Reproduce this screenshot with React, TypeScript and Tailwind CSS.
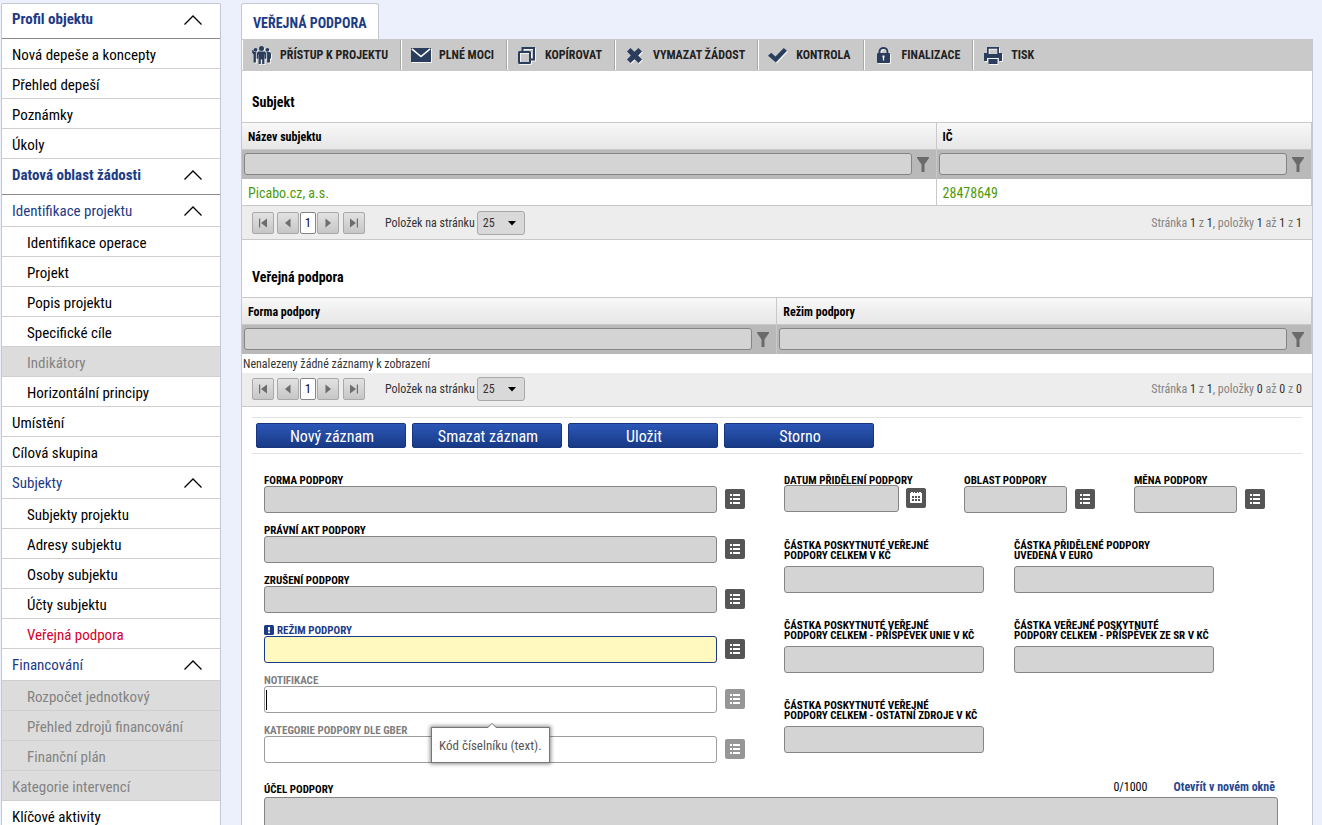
import React from "react";

type MenuKind = "main" | "group" | "item" | "sub";

interface MenuEntry {
  label: string;
  kind: MenuKind;
  disabled?: boolean;
  active?: boolean;
}

const MENU: MenuEntry[] = [
  { label: "Profil objektu", kind: "main" },
  { label: "Nová depeše a koncepty", kind: "item" },
  { label: "Přehled depeší", kind: "item" },
  { label: "Poznámky", kind: "item" },
  { label: "Úkoly", kind: "item" },
  { label: "Datová oblast žádosti", kind: "main" },
  { label: "Identifikace projektu", kind: "group" },
  { label: "Identifikace operace", kind: "sub" },
  { label: "Projekt", kind: "sub" },
  { label: "Popis projektu", kind: "sub" },
  { label: "Specifické cíle", kind: "sub" },
  { label: "Indikátory", kind: "sub", disabled: true },
  { label: "Horizontální principy", kind: "sub" },
  { label: "Umístění", kind: "item" },
  { label: "Cílová skupina", kind: "item" },
  { label: "Subjekty", kind: "group" },
  { label: "Subjekty projektu", kind: "sub" },
  { label: "Adresy subjektu", kind: "sub" },
  { label: "Osoby subjektu", kind: "sub" },
  { label: "Účty subjektu", kind: "sub" },
  { label: "Veřejná podpora", kind: "sub", active: true },
  { label: "Financování", kind: "group" },
  { label: "Rozpočet jednotkový", kind: "sub", disabled: true },
  { label: "Přehled zdrojů financování", kind: "sub", disabled: true },
  { label: "Finanční plán", kind: "sub", disabled: true },
  { label: "Kategorie intervencí", kind: "item", disabled: true },
  { label: "Klíčové aktivity", kind: "item" },
];

function Chevron() {
  return (
    <svg width="18" height="10" viewBox="0 0 18 10" fill="none" stroke="#000" strokeWidth="1.3" aria-hidden="true">
      <path d="M0.5 9.5 9 1l8.5 8.5" />
    </svg>
  );
}

function Sidebar() {
  return (
    <nav className="ml-px w-[220px] shrink-0 self-start rounded-t-[2px] border-x border-t border-[#c4c8d0] bg-white text-[15px]">
      <ul>
        {MENU.map((m, i) => {
          if (m.kind === "main") {
            return (
              <li key={m.label} className={i === 0 ? "h-[35px] border-b border-[#8a8a8a]" : "h-9 border-b border-[#8a8a8a]"}>
                <button type="button" className="flex h-full w-full items-center justify-between pr-[18px] pb-[3px] pl-[10px] font-bold text-[#1c3b85]">
                  {m.label}
                  <Chevron />
                </button>
              </li>
            );
          }
          if (m.kind === "group") {
            return (
              <li key={m.label} className="h-8 border-b border-[#cfcfcf]">
                <button type="button" className="flex h-full w-full items-center justify-between pt-px pr-[18px] pl-[10px] text-[#1c3b85]">
                  {m.label}
                  <Chevron />
                </button>
              </li>
            );
          }
          const pad = m.kind === "sub" ? "pl-[25px]" : "pl-[10px]";
          const tone = m.disabled ? "bg-[#dcdcdc] text-[#838383]" : m.active ? "text-[#d4002a]" : "text-black";
          return (
            <li key={m.label} className="h-[30px] border-b border-[#cfcfcf]">
              <a href="#" className={`flex h-full items-center pt-1 ${pad} ${tone}`}>
                {m.label}
              </a>
            </li>
          );
        })}
      </ul>
    </nav>
  );
}

const C = "#2b3d5c";

const TOOLS: { label: string; icon: React.ReactNode }[] = [
  {
    label: "PŘÍSTUP K PROJEKTU",
    icon: (
      <svg width="19" height="18" viewBox="0 0 19 18" fill={C}>
        <circle cx="9.5" cy="2.5" r="2.500" />
        <path d="M6.300 5.500h6.400l1.600 1.700v5.600h-1.600V8.500h-.3V18h-2.200v-4.500H8.800V18H6.600V8.500h-.3v4.300H4.700V7.200z" />
        <circle cx="3.600" cy="3.800" r="1.900" />
        <circle cx="15.400" cy="3.800" r="1.900" />
        <path d="M0 4.200h1.400l.8 1.900h2.600l-.9 1V16.500H1.600V8.500L.3 7z" />
        <path d="M14.200 6.100h3.500L19 7.400v5h-1v4.100h-2.900V7.100z" />
      </svg>
    ),
  },
  {
    label: "PLNÉ MOCI",
    icon: (
      <svg width="20" height="14" viewBox="0 0 20 14" fill={C}>
        <path d="M0 0h20v14H0z" />
        <path d="M.8 .8 10 8.500 19.200 .8" fill="none" stroke="#fff" strokeWidth="1.500" />
      </svg>
    ),
  },
  {
    label: "KOPÍROVAT",
    icon: (
      <svg width="17" height="17" viewBox="0 0 17 17" fill="none" stroke={C} strokeWidth="2">
        <rect x="1" y="5" width="11" height="11" rx=".5" />
        <path d="M4.500 5V1H16v11.500h-4" />
      </svg>
    ),
  },
  {
    label: "VYMAZAT ŽÁDOST",
    icon: (
      <svg width="15" height="15" viewBox="0 0 15 15" fill={C}>
        <path d="M3.500 0 7.500 3.800 11.500 0 15 3.500 11.200 7.500 15 11.500 11.500 15 7.500 11.200 3.500 15 0 11.500 3.800 7.500 0 3.500z" />
      </svg>
    ),
  },
  {
    label: "KONTROLA",
    icon: (
      <svg width="19" height="15" viewBox="0 0 19 15" fill={C}>
        <path d="M0 7.800 3.200 4.800 7.500 8.500 15.800 0 19 2.800 7.800 14.500z" />
      </svg>
    ),
  },
  {
    label: "FINALIZACE",
    icon: (
      <svg width="13" height="16" viewBox="0 0 13 16" fill={C}>
        <path d="M2.500 7V4.700a4 3.700 0 0 1 8 0V7" fill="none" stroke={C} strokeWidth="2" />
        <rect x="0" y="6" width="13" height="10" rx="1" />
        <path d="M5.500 8.500h2v2.200h-.4v2.800H5.900v-2.800h-.4z" fill="#fff" />
      </svg>
    ),
  },
  {
    label: "TISK",
    icon: (
      <svg width="18" height="17" viewBox="0 0 18 17" fill={C}>
        <path d="M3 0h12v6h3v8h-3v-3H3v3H0V6h3zM4.700 1.700V7h8.600V1.700z" fillRule="evenodd" />
        <path d="M4.500 12h9v5h-9z" />
      </svg>
    ),
  },
];

function Toolbar() {
  return (
    <div className="flex h-8 bg-[#c9c9c9]">
      {TOOLS.map((t, i) => (
        <button
          key={t.label}
          type="button"
          className={`my-px flex items-center border-l border-l-white text-[12px] font-bold text-[#222] ${
            i < TOOLS.length - 1 ? "border-r border-r-[#a8a8a8] pr-3" : ""
          }`}
        >
          <span className="flex w-[37px] justify-center [filter:drop-shadow(1px_1px_0_#f4f4f4)]">{t.icon}</span>
          {t.label}
        </button>
      ))}
    </div>
  );
}

function Funnel() {
  return (
    <svg width="12" height="15" viewBox="0 0 12 15" fill="#6a6a6a" aria-hidden="true">
      <path d="M0 0h12v1L7.500 7.500V15h-3V7.500L0 1z" />
    </svg>
  );
}

interface GridProps {
  title: string;
  columns: { label: string; width: string }[];
  row?: string[];
}

function DataTable({ title, columns, row }: GridProps) {
  return (
    <table className="w-full table-fixed border-collapse border-t border-[#c9c9c9]" aria-label={title}>
      <thead>
        <tr className="h-[27px] bg-linear-to-b from-[#f8f8f8] to-[#e6e6e6]">
          {columns.map((c) => (
            <th key={c.label} className={`${c.width} border-r border-b border-[#c9c9c9] p-0 pt-[2px] pl-1.5 text-left text-[12px] font-bold text-black`}>
              {c.label}
            </th>
          ))}
        </tr>
        <tr className="h-[29px] bg-[#b9b9b9]">
          {columns.map((c) => (
            <td key={c.label} className="border-r border-[#c9c9c9] p-0">
              <div className="flex items-center pl-[2px]">
                <input aria-label={`Filtr: ${c.label}`} className="h-[22px] min-w-0 flex-1 rounded-[3px] border border-[#858585] bg-[#d4d4d4] px-1 text-[12px]" />
                <button type="button" aria-label={`Filtrovat: ${c.label}`} className="flex w-6 justify-center pr-[2px]">
                  <Funnel />
                </button>
              </div>
            </td>
          ))}
        </tr>
      </thead>
      <tbody>
        {row ? (
          <tr className="h-[27px]">
            {row.map((v) => (
              <td key={v} className="border-r border-b border-[#c9c9c9] p-0 pt-[3px] pl-1.5 text-[14px] leading-5 text-[#4c9a0a]">
                {v}
              </td>
            ))}
          </tr>
        ) : (
          <tr className="h-[19px]">
            <td colSpan={columns.length} className="p-0 pt-[2px] pl-px text-[12px] leading-[17px] text-[#333]">
              Nenalezeny žádné záznamy k zobrazení
            </td>
          </tr>
        )}
      </tbody>
    </table>
  );
}

function PageButton({ label, d, bar, className = "" }: { label: string; d: string; bar?: number; className?: string }) {
  return (
    <button
      type="button"
      aria-label={label}
      className={`flex h-[22px] w-[22px] items-center justify-center rounded-[2px] border border-[#a9a9a9] bg-linear-to-b from-[#e2e2e2] to-[#c6c6c6] ${className}`}
    >
      <svg width="10" height="10" viewBox="0 0 10 10" fill="#6d6d6d">
        <path d={d} />
        {bar !== undefined && <rect x={bar} y="0.5" width="1.200" height="9" />}
      </svg>
    </button>
  );
}

function Pager({ id, from, to, total }: { id: string; from: number; to: number; total: number }) {
  return (
    <div className="flex h-[34px] items-center border-b border-[#c9c9c9] bg-[#ededed] pr-[10px] pl-[10px] text-[12px] text-[#333]">
      <PageButton label="První stránka" d="M9 .5v9L3 5z" bar={1} className="mr-[3px]" />
      <PageButton label="Předchozí stránka" d="M7.500 .5v9L2 5z" className="mr-px" />
      <button type="button" className="h-[22px] w-4 rounded-[2px] border border-[#858585] bg-white text-center text-black">
        1
      </button>
      <PageButton label="Další stránka" d="M2.500 .5v9L8 5z" className="mr-1 ml-px" />
      <PageButton label="Poslední stránka" d="M1 .5v9L7 5z" bar={7.800} className="mr-5" />
      <label htmlFor={id}>Položek na stránku</label>
      <div className="relative ml-0.5">
        <select id={id} defaultValue="25" className="block h-6 w-12 appearance-none rounded-[3px] border border-[#a9a9a9] bg-[#d9d9d9] pl-[5px] text-[12px] text-[#333]">
          <option>25</option>
          <option>50</option>
        </select>
        <svg className="pointer-events-none absolute top-[10px] right-[9px]" width="8" height="5" viewBox="0 0 8 5">
          <path d="M0 0h8L4 4.500z" />
        </svg>
      </div>
      <p className="ml-auto text-[#858585]">
        Stránka <b className="font-normal text-[#333]">1</b> z <b className="font-normal text-[#333]">1</b>, položky{" "}
        <b className="font-normal text-[#333]">{from}</b> až <b className="font-normal text-[#333]">{to}</b> z{" "}
        <b className="font-normal text-[#333]">{total}</b>
      </p>
    </div>
  );
}

function ListButton({ label, muted }: { label: string; muted?: boolean }) {
  return (
    <button type="button" aria-label={`Vybrat: ${label}`} className={`h-5 w-5 shrink-0 rounded-[2px] ${muted ? "bg-[#969696]" : "bg-[#555]"}`}>
      <svg width="20" height="20" viewBox="0 0 20 20" fill="#fff" shapeRendering="crispEdges">
        <path d="M5 5h2v2H5zM8 5h7v2H8zM5 9h2v2H5zM8 9h7v2H8zM5 13h2v2H5zM8 13h7v2H8z" />
      </svg>
    </button>
  );
}

function CalendarButton({ label }: { label: string }) {
  return (
    <button type="button" aria-label={`Kalendář: ${label}`} className="h-5 w-5 shrink-0 rounded-[2px] bg-[#555]">
      <svg width="20" height="20" viewBox="0 0 20 20" fill="#fff" shapeRendering="crispEdges">
        <path d="M4 5h1V4h2v1h1V4h1v1h2V4h1v1h1V4h2v1h1v10H4z" />
        <path fill="#555" d="M6 8h2v2H6zM9 8h2v2H9zM12 8h2v2h-2zM6 11h2v2H6zM9 11h2v2H9zM12 11h2v2h-2z" />
      </svg>
    </button>
  );
}

const INPUT = "block h-[27px] rounded-[3px] border px-1 text-[13px] outline-none";
const GRAY = "border-[#858585] bg-[#d4d4d4]";
const LABEL = "block pt-px text-[11px] font-bold leading-[10px] whitespace-pre-line";

interface PickFieldProps {
  id: string;
  label: string;
  variant?: "gray" | "required" | "optional";
  children?: React.ReactNode;
}

function PickField({ id, label, variant = "gray", children }: PickFieldProps) {
  const tone = variant === "gray" ? GRAY : variant === "required" ? "border-[#1c3b85] bg-[#fff9c0]" : "border-[#9c9c9c] bg-white";
  const text = variant === "gray" ? "text-black" : variant === "required" ? "text-[#1c3b85]" : "text-[#7f7f7f]";
  return (
    <div className="h-[50px]">
      <label htmlFor={id} className={`pt-px text-[11px] leading-[10px] font-bold flex items-center ${text}`}>
        {variant === "required" && (
          <svg className="mr-[3px] -mt-px" width="10" height="10" viewBox="0 0 10 10">
            <rect width="10" height="10" rx="1.500" fill="#1c3b85" />
            <path d="M4 2h2v3.500H4zM4 6.500h2v1.700H4z" fill="#fff" />
          </svg>
        )}
        {label}
      </label>
      <div className="relative flex items-center gap-2">
        <input id={id} className={`${INPUT} ${tone} min-w-0 flex-1`} />
        <ListButton label={label} muted={variant === "optional"} />
        {children}
      </div>
    </div>
  );
}

function SmallField({ id, label, calendar }: { id: string; label: string; calendar?: boolean }) {
  return (
    <div>
      <label htmlFor={id} className={`${LABEL} whitespace-nowrap ${calendar ? "h-[10px]" : "h-[11px]"}`}>
        {label}
      </label>
      <div className={`flex items-center ${calendar ? "gap-[7px]" : "gap-2"}`}>
        <input id={id} className={`${INPUT} ${GRAY} ${calendar ? "w-[115px]" : "w-[103px]"}`} />
        {calendar ? <CalendarButton label={label} /> : <ListButton label={label} />}
      </div>
    </div>
  );
}

function AmountField({ id, label }: { id: string; label: string }) {
  return (
    <div>
      <label htmlFor={id} className={`${LABEL} mb-[5px]`}>
        {label}
      </label>
      <input id={id} className={`${INPUT} ${GRAY} w-[200px]`} />
    </div>
  );
}

function ActionBar() {
  return (
    <div className="mx-[10px] mt-[10px] flex gap-1.5 border-y border-[#e3e3e3] px-1 py-[5px]">
      {["Nový záznam", "Smazat záznam", "Uložit", "Storno"].map((b) => (
        <button
          key={b}
          type="button"
          className="h-[25px] w-[150px] rounded-[2px] border border-[#183580] bg-linear-to-b from-[#2c57b8] to-[#183a86] pt-[3px] pl-[2px] text-[16px] leading-none text-white"
        >
          {b}
        </button>
      ))}
    </div>
  );
}

function SupportForm() {
  return (
    <form className="pr-[34px] pb-8 pl-[22px]">
      <div className="mt-[21px] grid grid-cols-[520fr_494fr]">
        <div className="pr-[39px]">
          <PickField id="forma" label="FORMA PODPORY" />
          <PickField id="akt" label="PRÁVNÍ AKT PODPORY" />
          <PickField id="zruseni" label="ZRUŠENÍ PODPORY" />
          <PickField id="rezim" label="REŽIM PODPORY" variant="required" />
          <PickField id="notifikace" label="NOTIFIKACE" variant="optional">
            <span className="absolute top-1 left-[2px] h-5 w-px bg-black" />
            <div
              role="tooltip"
              className="absolute top-[41px] left-[167px] z-10 border border-[#767676] bg-white px-[7px] pt-[9px] pb-[7px] text-[13px] leading-[18px] whitespace-nowrap text-[#555] shadow-[0_0_4px_1px_rgba(0,0,0,0.45)]"
            >
              <svg className="absolute -top-[5px] left-[55px]" width="10" height="6" viewBox="0 0 10 6">
                <path d="M0 5.500 5 .5l5 5V6H0z" fill="#fff" />
                <path d="M0 5 5 .5 10 5" fill="none" stroke="#767676" />
              </svg>
              Kód číselníku (text).
            </div>
          </PickField>
          <PickField id="gber" label="KATEGORIE PODPORY DLE GBER" variant="optional" />
        </div>
        <div>
          <div className="grid h-[65px] grid-cols-[180fr_170fr_144fr] items-start">
            <SmallField id="datum" label="DATUM PŘIDĚLENÍ PODPORY" calendar />
            <SmallField id="oblast" label="OBLAST PODPORY" />
            <SmallField id="mena" label="MĚNA PODPORY" />
          </div>
          <div className="grid grid-cols-[230fr_264fr] gap-y-[27px]">
            <AmountField id="castka-czk" label={"ČÁSTKA POSKYTNUTÉ VEŘEJNÉ\nPODPORY CELKEM V KČ"} />
            <AmountField id="castka-eur" label={"ČÁSTKA PŘIDĚLENÉ PODPORY\nUVEDENÁ V EURO"} />
            <AmountField id="castka-unie" label={"ČÁSTKA POSKYTNUTÉ VEŘEJNÉ\nPODPORY CELKEM - PŘÍSPĚVEK UNIE V KČ"} />
            <AmountField id="castka-sr" label={"ČÁSTKA VEŘEJNÉ POSKYTNUTÉ\nPODPORY CELKEM - PŘÍSPĚVEK ZE SR V KČ"} />
            <AmountField id="castka-ostatni" label={"ČÁSTKA POSKYTNUTÉ VEŘEJNÉ\nPODPORY CELKEM - OSTATNÍ ZDROJE V KČ"} />
          </div>
        </div>
      </div>
      <div className="mt-[3px] flex items-start pr-[3px] text-[12px] leading-[18px]">
        <label htmlFor="ucel" className={`${LABEL} mt-1.5`}>
          ÚČEL PODPORY
        </label>
        <span className="ml-auto text-black">0/1000</span>
        <a href="#" className="ml-[26px] font-bold text-[#24488f]">
          Otevřít v novém okně
        </a>
      </div>
      <textarea id="ucel" className={`mt-px block h-24 w-full resize-none rounded-[3px] border p-1 outline-none ${GRAY}`} />
    </form>
  );
}

export default function App() {
  return (
    <div className="flex min-h-screen items-stretch gap-5 bg-[#ecf0fc] pt-[3px] pr-[9px] font-['Roboto_Condensed','Liberation_Sans_Narrow',Roboto,sans-serif] text-black">
      <Sidebar />
      <main className="flex min-w-0 flex-1 flex-col">
        <h1 className="flex h-9 items-center self-start rounded-t-[3px] border border-b-0 border-[#c4c8d0] bg-white px-[11px] pt-[3px] text-[14px] font-bold text-[#1c3b85]">
          VEŘEJNÁ PODPORA
        </h1>
        <div className="flex-1 border-x border-[#c4c8d0] bg-white">
          <Toolbar />
          <h2 className="px-[10px] pt-[21px] pb-[10px] text-[14px] leading-5 font-bold">Subjekt</h2>
          <DataTable
            title="Subjekt"
            columns={[
              { label: "Název subjektu", width: "w-[64.9%]" },
              { label: "IČ", width: "w-[35.1%]" },
            ]}
            row={["Picabo.cz, a.s.", "28478649"]}
          />
          <Pager id="pocet-subjekt" from={1} to={1} total={1} />
          <h2 className="px-[10px] pt-[27px] pb-[10px] text-[14px] leading-5 font-bold">Veřejná podpora</h2>
          <DataTable
            title="Veřejná podpora"
            columns={[
              { label: "Forma podpory", width: "w-1/2" },
              { label: "Režim podpory", width: "w-1/2" },
            ]}
          />
          <Pager id="pocet-podpora" from={0} to={0} total={0} />
          <ActionBar />
          <SupportForm />
        </div>
      </main>
    </div>
  );
}
